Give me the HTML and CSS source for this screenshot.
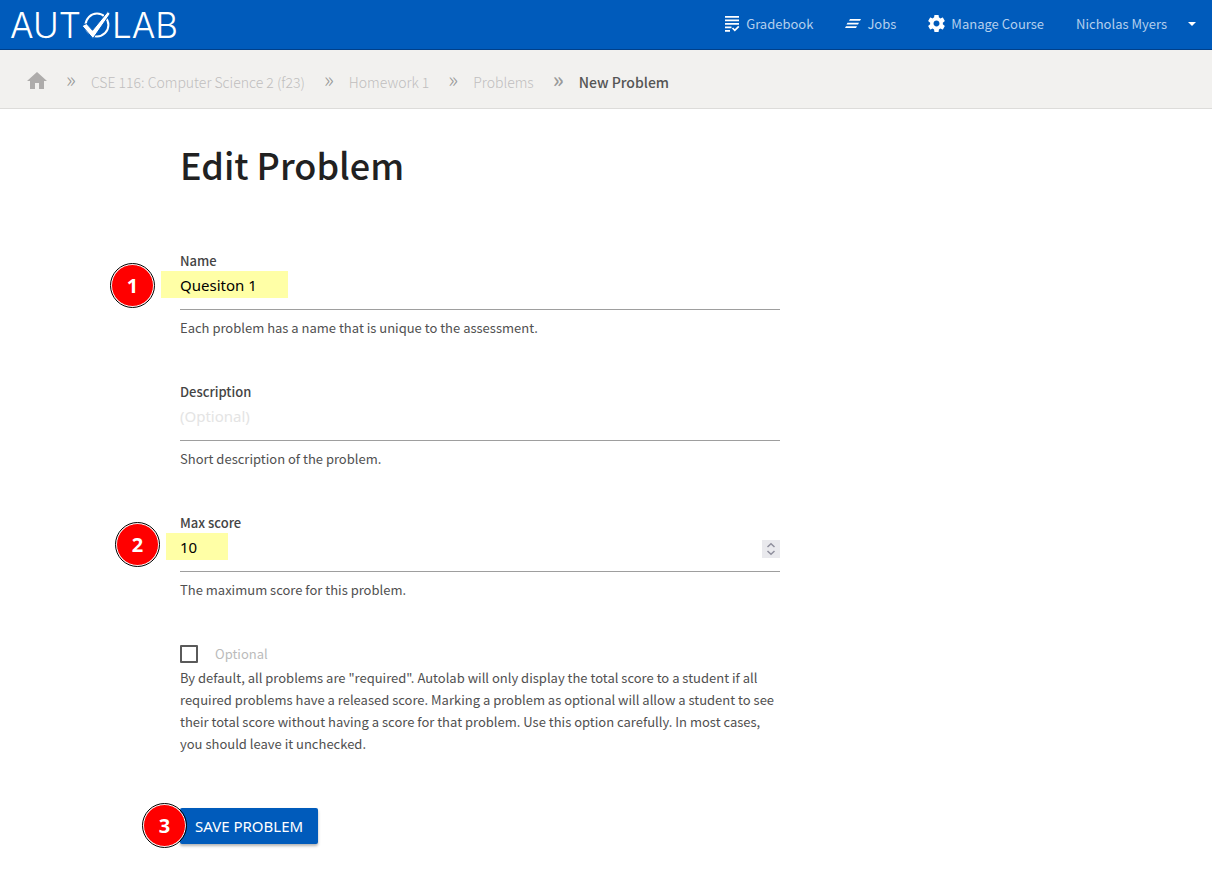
FILE: index.html
```html
<!DOCTYPE html>
<html lang="en">
<head>
<meta charset="utf-8">
<title>Autolab - New Problem</title>
<link rel="stylesheet" href="styles.css">
</head>
<body>
<header class="topbar">
  <a class="logo" href="#" aria-label="Autolab">
    <span>AUT</span>
    <svg class="logo-mark" viewBox="0 0 28 28" width="28" height="28" aria-hidden="true">
      <circle cx="15" cy="14" r="11.4" fill="none" stroke="#fff" stroke-width="2"/>
      <path d="M0 14.800L4.500 12.600 10.500 19.300 25.800 0.500 28.200 2.800 11 27.500Z" fill="#fff" stroke="#005bbb" stroke-width="1"/>
    </svg>
    <span>LAB</span>
  </a>
  <nav class="menu" aria-label="Course">
    <a class="menu-link" href="#">
      <svg viewBox="0 0 16 17" width="16" height="17" fill="none" stroke="#fff" stroke-width="1.7" aria-hidden="true"><path d="M1 1.8h14M1 5.3h14M1 8.8h14M1 12.3h6.500M1 15.800h5"/><path d="M8.500 13l2.300 2.300 4-4"/></svg>
      Gradebook</a>
    <a class="menu-link" href="#">
      <svg viewBox="0 0 16 17" width="16" height="17" fill="#fff" aria-hidden="true"><path d="M5 4h11l-1 1.700H4zM2.500 7.700H14l-1 1.700H1.500zM1 11.300h11l-1 1.700H0z"/></svg>
      Jobs</a>
    <a class="menu-link" href="#">
      <svg viewBox="2 2 20 20" width="17" height="17" fill="#fff" aria-hidden="true"><path d="M19.430 12.980c.04-.32.07-.64.07-.98s-.03-.66-.07-.98l2.110-1.650c.19-.15.24-.42.12-.64l-2-3.460c-.12-.22-.39-.3-.61-.22l-2.490 1c-.52-.4-1.080-.73-1.690-.98l-.38-2.650C14.460 2.180 14.250 2 14 2h-4c-.25 0-.46.18-.49.42l-.38 2.650c-.61.25-1.170.59-1.690.98l-2.490-1c-.23-.09-.49 0-.61.22l-2 3.460c-.13.22-.07.49.12.64l2.110 1.650c-.04.32-.07.65-.07.98s.03.66.07.98l-2.110 1.650c-.19.15-.24.42-.12.64l2 3.460c.12.22.39.3.61.22l2.490-1c.52.4 1.080.73 1.690.98l.38 2.650c.03.24.24.42.49.42h4c.25 0 .46-.18.49-.42l.38-2.650c.61-.25 1.170-.59 1.690-.98l2.490 1c.23.09.49 0 .61-.22l2-3.460c.12-.22.07-.49-.12-.64l-2.110-1.650zM12 15.500c-1.930 0-3.500-1.570-3.500-3.500s1.570-3.500 3.500-3.500 3.500 1.570 3.500 3.500-1.570 3.500-3.500 3.500z"/></svg>
      Manage Course</a>
    <a class="menu-link menu-user" href="#">Nicholas Myers
      <svg viewBox="0 0 8 4" width="8" height="4" fill="#fff" aria-hidden="true"><path d="M0 0h8L4 4z"/></svg></a>
  </nav>
</header>
<nav class="crumbs" aria-label="Breadcrumb">
  <a class="crumb-home" href="#" aria-label="Home"><svg viewBox="2 3 20 17" width="20" height="17" fill="#aeacab" aria-hidden="true"><path d="M10 20v-6h4v6h5v-8h3L12 3 2 12h3v8z"/></svg></a>
  <span class="sep">»</span>
  <a href="#">CSE 116: Computer Science 2 (f23)</a>
  <span class="sep">»</span>
  <a href="#">Homework 1</a>
  <span class="sep">»</span>
  <a href="#">Problems</a>
  <span class="sep sep-last">»</span>
  <span class="current">New Problem</span>
</nav>
<main class="content">
  <h1>Edit Problem</h1>
  <form class="form">
    <div class="field">
      <span class="mark mark-name"></span>
      <span class="step step-1">1</span>
      <label for="name">Name</label>
      <input id="name" type="text" value="Quesiton 1">
      <p>Each problem has a name that is unique to the assessment.</p>
    </div>
    <div class="field">
      <label for="description">Description</label>
      <input id="description" type="text" placeholder="(Optional)">
      <p>Short description of the problem.</p>
    </div>
    <div class="field">
      <span class="mark mark-score"></span>
      <span class="step step-2">2</span>
      <label for="score">Max score</label>
      <div class="number">
        <input id="score" type="number" value="10">
        <button class="spin" type="button" aria-label="Change score"><svg viewBox="0 0 18 18" width="18" height="18" fill="none" stroke="#8f8f9d" stroke-width="1.500" aria-hidden="true"><path d="M5.500 7L9 3.700 12.500 7M5.500 11L9 14.300 12.500 11"/></svg></button>
      </div>
      <p>The maximum score for this problem.</p>
    </div>
    <div class="option">
      <label class="check" for="optional"><input id="optional" type="checkbox">Optional</label>
      <p>By default, all problems are "required". Autolab will only display the total score to a student if all required problems have a released score. Marking a problem as optional will allow a student to see their total score without having a score for that problem. Use this option carefully. In most cases, you should leave it unchecked.</p>
    </div>
    <div class="actions">
      <button class="save" type="submit">SAVE PROBLEM</button>
      <span class="step step-3">3</span>
    </div>
  </form>
</main>
</body>
</html>
```
FILE: styles.css
```css
* { box-sizing: border-box; }
body {
  margin: 0;
  background: #fff;
  color: #505050;
  font-family: "Noto Sans CJK SC", "Noto Sans", sans-serif;
  font-size: 13px;
  font-weight: 400;
  line-height: 22px;
}
a { color: inherit; text-decoration: none; }
p, h1 { margin: 0; }
svg { display: block; flex: none; }

.topbar {
  display: flex;
  align-items: center;
  justify-content: space-between;
  height: 50px;
  padding: 0 16px 2px 10px;
  background: #005bbb;
  border-bottom: 1px solid #00408a;
  color: #b4cfed;
}
.logo {
  display: flex;
  align-items: center;
  padding-top: 2px;
  color: #fff;
  font-family: Inter, sans-serif;
  font-size: 35px;
  font-weight: 300;
  line-height: 46px;
}
.logo-mark { margin: 0 2px 0 1px; }
.menu { display: flex; gap: 32px; }
.menu-link { display: flex; align-items: center; gap: 6px; }
.menu-user { gap: 21px; }

.crumbs {
  display: flex;
  align-items: center;
  gap: 15px;
  height: 59px;
  padding: 6px 27px 0;
  background: #f2f1ef;
  border-bottom: 1px solid #dddcda;
  color: #c0bebe;
  font-size: 14px;
  font-weight: 300;
}
.crumb-home { padding-bottom: 4px; }
.sep {
  padding: 0 0 8px 4px;
  color: #999;
  font-size: 22px;
}
.sep-last { font-weight: 500; }
.current { color: #555; font-weight: 500; }

.content { padding: 27px 32px 24px 180px; }
h1 {
  color: #212121;
  font-size: 36px;
  font-weight: 500;
  line-height: 56px;
}
.form { max-width: 600px; padding-top: 58px; }
.field { position: relative; margin-bottom: 42px; }
.field label {
  display: block;
  color: #444;
  font-weight: 500;
}
.field input {
  position: relative;
  display: block;
  width: 100%;
  height: 38px;
  margin: 0;
  padding: 0 0 12px;
  background: none;
  border: 0;
  border-bottom: 1px solid #9e9e9e;
  outline: 0;
  color: #000;
  font-family: "Noto Sans", sans-serif;
  font-size: 15px;
  font-weight: 400;
  appearance: textfield;
}
.field input::-webkit-inner-spin-button { appearance: none; margin: 0; }
.field input::placeholder { color: #e4e4e4; opacity: 1; }
.field p { padding-top: 7px; }
.number { position: relative; }
.spin {
  position: absolute;
  top: 6px;
  right: 0;
  padding: 0;
  border: 0;
  background: #e9e9ed;
}
.mark { position: absolute; height: 27px; background: #ffffa6; }
.mark-name { top: 21px; left: -19px; width: 127px; }
.mark-score { top: 21px; left: -14px; width: 62px; }
.step {
  position: absolute;
  width: 43px;
  height: 43px;
  border: 1px solid #fff;
  border-radius: 50%;
  outline: 1px solid #000;
  background: #f00;
  color: #fff;
  font-family: "Open Sans", sans-serif;
  font-size: 20px;
  font-weight: 700;
  line-height: 42px;
  text-align: center;
}
.step-1 { top: 14px; left: -69px; }
.step-2 { top: 11px; left: -64px; }
.step-3 { top: -4px; left: -37px; }

.check {
  display: flex;
  align-items: center;
  gap: 17px;
  padding-bottom: 2px;
  color: #bbb;
}
.check input {
  appearance: none;
  width: 18px;
  height: 18px;
  margin: 0;
  border: 2px solid #5a5a5a;
  border-radius: 1px;
}
.actions { position: relative; margin-top: 53px; }
.save {
  display: block;
  height: 36px;
  padding: 0 15px;
  border: 0;
  border-radius: 2px;
  background: #005bbb;
  box-shadow: 0 2px 3px rgba(0, 0, 0, .3);
  color: #fff;
  font-family: "Noto Sans", sans-serif;
  font-size: 15px;
}
```
